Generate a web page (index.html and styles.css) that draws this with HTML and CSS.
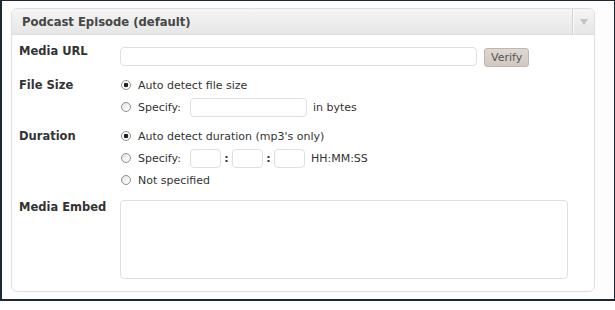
FILE: index.html
```html
<!DOCTYPE html>
<html lang="en">
<head>
  <meta charset="utf-8" />
  <title>Podcast Episode</title>
  <link rel="stylesheet" href="styles.css">
</head>
<body>
  <div class="frame">
    <div class="postbox">
      <div class="postbox-head">
        <h3>Podcast Episode (default)</h3>
        <div class="toggle"><span class="arrow"></span></div>
      </div>

      <div class="inside">
        <div class="row row-url">
          <label class="label">Media URL</label>
          <div class="field field-url">
            <input type="text" class="text url" />
            <button class="btn">Verify</button>
          </div>
        </div>

        <div class="row">
          <label class="label label-tall">File Size</label>
          <div class="field">
            <div class="option">
              <input type="radio" name="size" checked />
              <span>Auto detect file size</span>
            </div>
            <div class="option">
              <input type="radio" name="size" />
              <span>Specify:</span>
              <input type="text" class="text bytes" />
              <span>in bytes</span>
            </div>
          </div>
        </div>

        <div class="row row-duration">
          <label class="label label-tall">Duration</label>
          <div class="field">
            <div class="option">
              <input type="radio" name="duration" checked />
              <span>Auto detect duration (mp3's only)</span>
            </div>
            <div class="option">
              <input type="radio" name="duration" />
              <span>Specify:</span>
              <input type="text" class="text time" />
              <b class="sep">:</b>
              <input type="text" class="text time" />
              <b class="sep">:</b>
              <input type="text" class="text time" />
              <span>HH:MM:SS</span>
            </div>
            <div class="option">
              <input type="radio" name="duration" />
              <span>Not specified</span>
            </div>
          </div>
        </div>

        <div class="row row-embed">
          <label class="label">Media Embed</label>
          <div class="field">
            <textarea class="embed"></textarea>
          </div>
        </div>
      </div>
    </div>
  </div>
</body>
</html>
```

FILE: styles.css
```css
body {
  margin: 0;
  background-color: #fff;
  font-family: 'DejaVu Sans', Verdana, sans-serif;
  font-size: 11px;
  color: #333;
}

.frame {
  width: 594px;
  height: 291px;
  padding: 7px 9px 0 9px;
  border-style: solid;
  border-color: #1c2935;
  border-width: 1px 2px 2px 2px;
  background-color: #fdfdfd;
  box-shadow: 3px 4px 4px rgba(0, 0, 0, 0.65);
}

.postbox {
  width: 582px;
  height: 282px;
  border: 1px solid #dfdfdf;
  border-radius: 6px;
  background-color: #fff;
  overflow: hidden;
}

.postbox-head {
  display: flex;
  height: 25px;
  border-bottom: 1px solid #dfdfdf;
  background: linear-gradient(#f5f5f5, #e6e6e6);
}

.postbox-head h3 {
  flex: 1;
  margin: 0;
  padding: 1px 0 0 10px;
  font-size: 11.6px;
  line-height: 24px;
  color: #464646;
}

.toggle {
  width: 21px;
  display: flex;
  justify-content: center;
  align-items: center;
  border-left: 1px solid #d4d4d4;
  box-shadow: inset 1px 0 0 #fafafa;
}

.arrow {
  width: 0;
  height: 0;
  margin-left: 1px;
  border-left: 4px solid transparent;
  border-right: 4px solid transparent;
  border-top: 6px solid #c4c4c4;
}

.inside {
  padding: 8px 7px 0 7px;
}

.row {
  display: flex;
  align-items: flex-start;
  margin-top: 8px;
}

.row-url {
  margin-top: 0;
}

.row-duration {
  margin-top: 7px;
}

.row-embed {
  margin-top: 7px;
}

.label {
  width: 101px;
  flex-shrink: 0;
  font-weight: bold;
  font-size: 11.5px;
  line-height: 16px;
}

.label-tall {
  line-height: 20px;
}

.field-url {
  display: flex;
  align-items: flex-start;
}

.text {
  box-sizing: border-box;
  height: 19px;
  margin: 0;
  padding: 0 3px;
  border: 1px solid #dfdfdf;
  border-radius: 4px;
  background-color: #fff;
  font: inherit;
}

.url {
  width: 357px;
  margin-top: 4px;
}

.btn {
  box-sizing: border-box;
  height: 19px;
  margin: 5px 0 0 7px;
  padding: 0 6px;
  border: 1px solid #bdb7ae;
  border-radius: 3px;
  background: linear-gradient(#ddd8d1, #cfc9c1);
  font-family: inherit;
  font-size: 11px;
  color: #555;
}

.option {
  display: flex;
  align-items: center;
  height: 20px;
  margin-bottom: 2px;
}

.option span {
  white-space: nowrap;
}

.option input[type="radio"] {
  appearance: none;
  width: 10px;
  height: 10px;
  margin: 0 7px 0 1px;
  border: 1px solid #8f8f8f;
  border-radius: 50%;
  background: linear-gradient(135deg, #e4e4e4, #fff);
}

.option input[type="radio"]:checked {
  background: radial-gradient(circle, #222 0 2px, #fff 2.6px);
}

.bytes {
  width: 117px;
  margin: 0 6px 0 9px;
}

.time {
  width: 31px;
}

.option span + .time {
  margin-left: 9px;
}

.time:last-of-type {
  margin-right: 6px;
}

.sep {
  width: 11px;
  text-align: center;
}

.embed {
  display: block;
  box-sizing: border-box;
  width: 448px;
  height: 79px;
  margin-top: 1px;
  border: 1px solid #dfdfdf;
  border-radius: 4px;
  resize: none;
}
```
